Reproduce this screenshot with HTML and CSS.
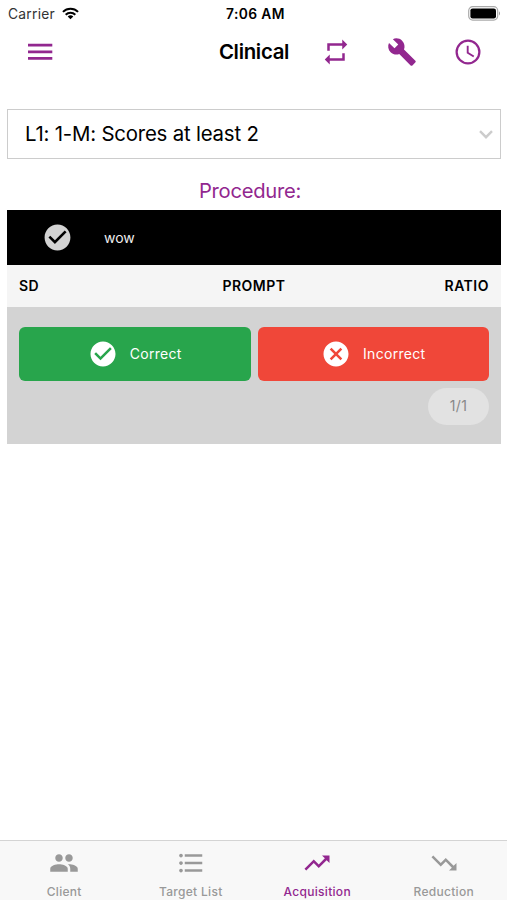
FILE: index.html
```html
<!DOCTYPE html>
<html lang="en">
<head>
    <meta charset="UTF-8">
    <meta name="viewport" content="width=device-width, initial-scale=1.0">
    <title>Clinical</title>
    <link rel="stylesheet" href="styles.css">
</head>
<body>
    <div class="status">
        <div class="carrier">
            <span>Carrier</span>
            <svg class="wifi" viewBox="0 0 18 13">
                <path d="M1 4.8a11.3 11.3 0 0 1 16 0M3.9 7.8a7.2 7.2 0 0 1 10.2 0" fill="none" stroke="#000" stroke-width="2.1"/>
                <path d="M9 12.6L6 9.8a4.3 4.3 0 0 1 6 0z"/>
            </svg>
        </div>
        <div class="time">7:06 AM</div>
        <div class="power">
            <svg class="battery" viewBox="0 0 33 15">
                <rect x=".7" y=".7" width="29" height="13.4" rx="4" fill="#fff" stroke="#aaa" stroke-width="1.2"/>
                <rect x="2.4" y="2.4" width="25.6" height="10" rx="2.2"/>
                <path d="M31 5.2q2 2.2 0 4.4z" fill="#999"/>
            </svg>
        </div>
    </div>

    <header class="header">
        <button class="menu"><svg viewBox="0 0 26 18"><path d="M1 2.2h24.300M1 8.800h24.300M1 15.300h24.300"/></svg></button>
        <h1 class="title">Clinical</h1>
        <div class="actions">
            <button><svg viewBox="0 0 24 24"><path d="M7 7h10v3l4-4-4-4v3H5v6h2V7zm10 10H7v-3l-4 4 4 4v-3h12v-6h-2v4z"/></svg></button>
            <button><svg viewBox="0 0 24 24"><path d="M22.7 19l-9.1-9.1c.9-2.3.4-5-1.5-6.9-2-2-5-2.4-7.4-1.3L9 6 6 9 1.6 4.7C.4 7.1.9 10.1 2.9 12.1c1.9 1.9 4.6 2.4 6.9 1.5l9.1 9.1c.4.4 1 .4 1.4 0l2.3-2.3c.5-.4.5-1.1.1-1.4z"/></svg></button>
            <button><svg viewBox="0 0 24 24"><path d="M12 2a10 10 0 1 0 0 20 10 10 0 0 0 0-20zm0 18.2a8.2 8.2 0 1 1 0-16.4 8.2 8.2 0 0 1 0 16.4zM12.5 7H11v6l5.2 3.2.8-1.3-4.5-2.7z"/></svg></button>
        </div>
    </header>

    <main class="main">
        <div class="select">
            <span>L1: 1-M: Scores at least 2</span>
            <svg class="chevron" viewBox="0 0 14 9"><path d="M1 1.2l6 6 6-6"/></svg>
        </div>
        <h2 class="procedure">Procedure:</h2>

        <section class="card">
            <div class="target">
                <svg viewBox="0 0 24 24"><path d="M12 2C6.48 2 2 6.48 2 12s4.48 10 10 10 10-4.48 10-10S17.52 2 12 2zm-2 15l-5-5 1.41-1.41L10 14.17l7.59-7.59L19 8l-9 9z"/></svg>
                <span>wow</span>
            </div>
            <div class="columns">
                <span>SD</span>
                <span>PROMPT</span>
                <span class="ratio">RATIO</span>
            </div>
            <div class="answers">
                <div class="buttons">
                    <button class="answer correct">
                        <svg viewBox="0 0 24 24"><path d="M12 2C6.48 2 2 6.48 2 12s4.48 10 10 10 10-4.48 10-10S17.52 2 12 2zm-2 15l-5-5 1.41-1.41L10 14.17l7.59-7.59L19 8l-9 9z"/></svg>
                        <span>Correct</span>
                    </button>
                    <button class="answer incorrect">
                        <svg viewBox="0 0 24 24"><path d="M12 2C6.47 2 2 6.47 2 12s4.47 10 10 10 10-4.47 10-10S17.53 2 12 2zm5 13.59L15.59 17 12 13.41 8.41 17 7 15.59 10.59 12 7 8.41 8.41 7 12 10.59 15.59 7 17 8.41 13.41 12 17 15.59z"/></svg>
                        <span>Incorrect</span>
                    </button>
                </div>
                <div class="count">1/1</div>
            </div>
        </section>
    </main>

    <nav class="tabs">
        <a class="tab">
            <svg viewBox="0 0 24 24"><path d="M16 11c1.66 0 2.99-1.34 2.99-3S17.66 5 16 5s-3 1.34-3 3 1.34 3 3 3zm-8 0c1.66 0 2.99-1.34 2.99-3S9.66 5 8 5 5 6.34 5 8s1.34 3 3 3zm0 2c-2.33 0-7 1.17-7 3.5V19h14v-2.500c0-2.330-4.670-3.500-7-3.500zm8 0c-.29 0-.62.02-.97.05 1.160.840 1.970 1.970 1.970 3.450V19h6v-2.500c0-2.330-4.670-3.500-7-3.500z"/></svg>
            <span>Client</span>
        </a>
        <a class="tab">
            <svg viewBox="0 0 24 24"><path d="M4 10.500c-.83 0-1.500.67-1.500 1.500s.67 1.500 1.500 1.500 1.500-.67 1.500-1.500-.67-1.500-1.500-1.500zm0-6c-.83 0-1.500.67-1.500 1.500S3.170 7.500 4 7.500 5.500 6.830 5.500 6 4.830 4.500 4 4.500zm0 12c-.83 0-1.500.68-1.500 1.500s.68 1.500 1.500 1.500 1.500-.68 1.500-1.500-.67-1.500-1.500-1.500zM7 19h14v-2H7v2zm0-6h14v-2H7v2zm0-8v2h14V5H7z"/></svg>
            <span>Target List</span>
        </a>
        <a class="tab active">
            <svg viewBox="0 0 24 24"><path d="M16 6l2.290 2.290-4.880 4.880-4-4L2 16.590 3.410 18l6-6 4 4 6.300-6.290L22 12V6z"/></svg>
            <span>Acquisition</span>
        </a>
        <a class="tab">
            <svg viewBox="0 0 24 24"><path d="M16 18l2.290-2.290-4.880-4.880-4 4L2 7.410 3.410 6l6 6 4-4 6.300 6.290L22 12v6z"/></svg>
            <span>Reduction</span>
        </a>
    </nav>
</body>
</html>
```

FILE: styles.css
```css
*{margin: 0;padding: 0;box-sizing: border-box;}
body{
    height: 100vh;
    display: flex;
    flex-direction: column;
    background-color: white;
    color: black;
    font-family: Inter, "Liberation Sans", sans-serif;
}
svg{display: block;}
button{
    border: none;
    background: none;
    font-family: inherit;
}
.status{
    height: 27px;
    padding: 0 6px 0 8px;
    display: grid;
    grid-template-columns: 1fr auto 1fr;
    align-items: center;
    font-size: 13.8px;
    letter-spacing: 0.25px;
}
.carrier{
    display: flex;
    align-items: center;
    gap: 7px;
    color: #333;
}
.wifi{width: 17px;height: 13px;}
.time{
    padding-left: 2px;
    font-weight: 600;
    letter-spacing: 0.4px;
}
.power{
    display: flex;
    justify-content: end;
}
.battery{width: 33px;height: 15px;}
.header{
    height: 49px;
    padding: 1px 24px 0 27px;
    display: grid;
    grid-template-columns: 1fr auto 1fr;
    align-items: center;
}
.menu{width: 26px;}
.menu svg{
    width: 26px;
    height: 18px;
    stroke: #92278f;
    stroke-width: 2.8;
}
.title{
    padding: 0 2px 1px 0;
    font-size: 20.4px;
    font-weight: 600;
    letter-spacing: -0.3px;
}
.actions{
    display: flex;
    justify-content: end;
    gap: 36px;
}
.actions svg{
    width: 30px;
    height: 30px;
    fill: #92278f;
}
.main{
    flex: 1;
    padding: 33px 6px 0 7px;
}
.select{
    height: 50px;
    padding: 0 7px 0 17px;
    display: flex;
    justify-content: space-between;
    align-items: center;
    border: 1px solid #ccc;
    font-size: 20.4px;
    letter-spacing: -0.2px;
}
.select span{padding-bottom: 2px;}
.chevron{
    width: 14px;
    height: 9px;
    fill: none;
    stroke: #ccc;
    stroke-width: 2.4;
}
.procedure{
    height: 51px;
    padding: 7px 8px 0 0;
    line-height: 50px;
    text-align: center;
    font-size: 20.2px;
    font-weight: 400;
    letter-spacing: -0.25px;
    color: #92278f;
}
.card{
    height: 234px;
    display: flex;
    flex-direction: column;
}
.target{
    height: 55px;
    padding-left: 35px;
    display: flex;
    align-items: center;
    gap: 31px;
    background-color: black;
    color: #eee;
    font-size: 14px;
}
.target svg{
    width: 31px;
    height: 31px;
    fill: lightgray;
}
.columns{
    height: 42px;
    padding: 0 12px 1px;
    display: grid;
    grid-template-columns: 1fr auto 1fr;
    align-items: center;
    background-color: #f5f5f5;
    font-size: 14px;
    font-weight: 600;
    letter-spacing: 0.5px;
}
.ratio{text-align: right;}
.answers{
    flex: 1;
    padding: 20px 12px 0;
    display: flex;
    flex-direction: column;
    align-items: end;
    gap: 7px;
    background-color: lightgray;
}
.buttons{
    width: 100%;
    display: flex;
    gap: 7px;
}
.answer{
    flex: 1;
    height: 54px;
    display: flex;
    justify-content: center;
    align-items: center;
    gap: 12px;
    border-radius: 6px;
    color: white;
    font-size: 14px;
    letter-spacing: 0.3px;
}
.answer span{padding-bottom: 2px;}
.answer svg{
    width: 30px;
    height: 30px;
    fill: white;
}
.correct{background-color: #28a54c;}
.incorrect{background-color: #f04739;}
.count{
    width: 61px;
    height: 37px;
    border-radius: 19px;
    background-color: #e2e2e2;
    color: #888;
    text-align: center;
    line-height: 36px;
    font-size: 14px;
    letter-spacing: 0.3px;
}
.tabs{
    height: 60px;
    padding-left: 1px;
    display: flex;
    border-top: 1px solid #d4d4d4;
    background-color: #f8f8f8;
}
.tab{
    flex: 1;
    padding-top: 7px;
    display: flex;
    flex-direction: column;
    align-items: center;
    gap: 6px;
    color: #999;
    font-size: 12px;
    font-weight: 500;
    letter-spacing: 0.3px;
}
.tab svg{
    width: 30px;
    height: 30px;
    fill: currentColor;
}
.active{color: #92278f;}
```
